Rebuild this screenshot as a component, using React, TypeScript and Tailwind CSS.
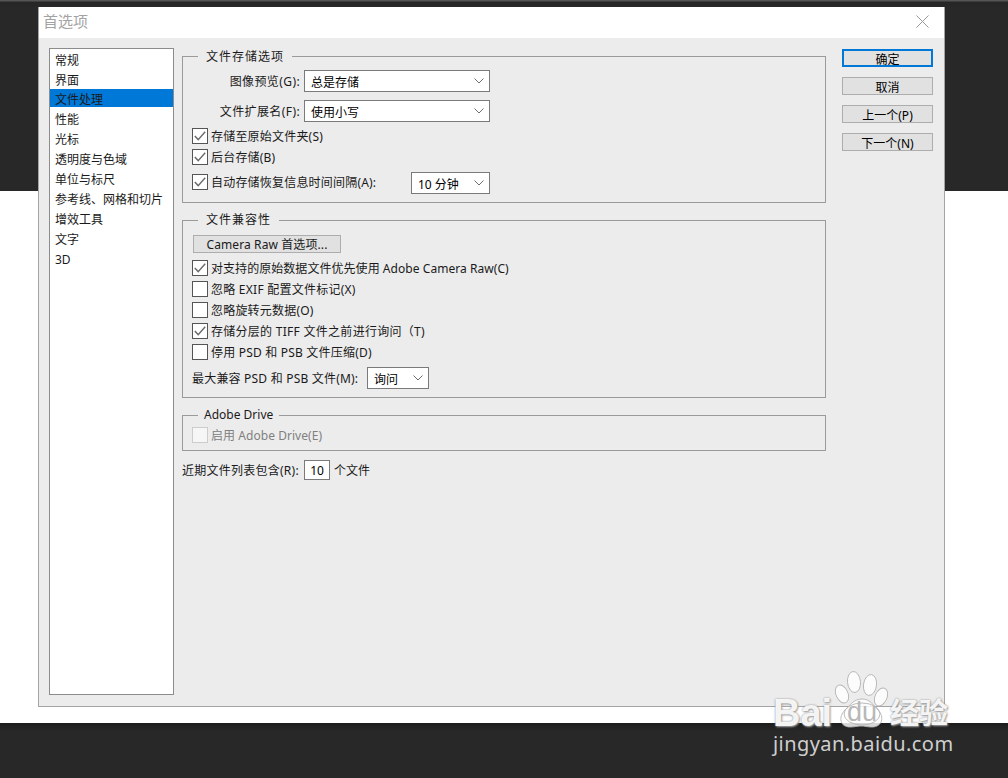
import React from "react";

const FONT = "[font-family:'Noto_Sans','Noto_Sans_CJK_SC',sans-serif]";

function Chevron() {
  return (
    <svg width="10" height="6" viewBox="0 0 10 6" className="shrink-0" fill="none" stroke="#6e6e6e" strokeWidth="1">
      <path d="M0.5 0.5 L5 5 L9.5 0.5" />
    </svg>
  );
}

function Select({ value, w }: { value: string; w: string }) {
  return (
    <div className={`${w} h-[22px] shrink-0 flex items-center justify-between bg-white border border-[#7a7a7a] pl-[6px] pr-[5px] text-black`}>
      <span className="pt-[3px]">{value}</span>
      <Chevron />
    </div>
  );
}

function Check({ label, checked, disabled, className = "", textClass = "tracking-[0.2px]" }: { label: string; checked?: boolean; disabled?: boolean; className?: string; textClass?: string }) {
  return (
    <div className={`flex items-center h-[16px] ${className}`}>
      <div className={`w-[16px] h-[16px] shrink-0 flex items-center justify-center border ${disabled ? "border-[#cccccc] bg-[#f6f6f6]" : "border-[#555555] bg-white"}`}>
        {checked && (
          <svg width="12" height="10" viewBox="0 0 12 10" fill="none" stroke="#6a6a6a" strokeWidth="1.4">
            <path d="M0.8 5 L4.2 8.6 L11.2 0.8" />
          </svg>
        )}
      </div>
      <span className={`ml-[3px] pt-[2px] whitespace-pre ${textClass} ${disabled ? "text-[#808080]" : "text-[#1a1a1a]"}`}>{label}</span>
    </div>
  );
}

function Group({ legend, className, legendClass, children }: { legend: string; className: string; legendClass: string; children: React.ReactNode }) {
  return (
    <fieldset className={`border border-[#9a9a9a] pl-[9px] pr-[10px] ${className}`}>
      <legend className={`h-[16px] text-[#1a1a1a] ${legendClass}`}>{legend}</legend>
      {children}
    </fieldset>
  );
}

function Btn({ label, primary }: { label: string; primary?: boolean }) {
  return (
    <div className={`w-[91px] h-[18px] pt-[3px] flex items-center justify-center bg-[#e1e1e1] text-black leading-none ${primary ? "border-2 border-[#0078d7]" : "border border-[#adadad]"}`}>
      {label}
    </div>
  );
}

const items = ["常规", "界面", "文件处理", "性能", "光标", "透明度与色域", "单位与标尺", "参考线、网格和切片", "增效工具", "文字", "3D"];

function Watermark() {
  return (
    <div className="absolute left-[770px] top-[665px] w-[190px] h-[100px] pointer-events-none">
      <svg className="absolute left-[62px] top-[3px]" width="58" height="62" viewBox="0 0 58 62" fill="#ffffff" fillOpacity="0.82" stroke="#b4b4b4" strokeWidth="0.9">
        <ellipse cx="22" cy="14" rx="6.5" ry="10.5" transform="rotate(-6 22 14)" />
        <ellipse cx="38" cy="17" rx="6.5" ry="10.5" transform="rotate(8 38 17)" />
        <ellipse cx="10" cy="26" rx="6" ry="9.5" transform="rotate(-24 10 26)" />
        <ellipse cx="49" cy="29" rx="6" ry="9.5" transform="rotate(24 49 29)" />
        <path d="M30 31 C38 31 41 37 46 42 C53 49 50 59 40 59 C35 59 33 58 29 58 C25 58 23 59 18 59 C8 59 6 49 13 42 C18 37 22 31 30 31 Z" />
        <ellipse cx="30" cy="46" rx="18" ry="11" fill="none" />
      </svg>
      <div className="absolute left-[3px] top-[26px] text-[38px] leading-[44px] font-bold text-white/90 [font-family:'Liberation_Sans',sans-serif] [text-shadow:0_0_2px_#8a8a8a,1px_1px_2px_#a8a8a8]">Bai</div>
      <div className="absolute left-[77px] top-[34px] text-[27px] leading-[26px] text-[#b8b8b8] [font-family:'Liberation_Sans',sans-serif]">du</div>
      <div className="absolute left-[120px] top-[30px] text-[29px] leading-[32px] font-bold text-white/90 [font-family:'Noto_Sans_CJK_SC',sans-serif] [text-shadow:0_0_2px_#8a8a8a,1px_1px_2px_#a8a8a8]">经验</div>
      <div className="absolute left-[3px] top-[66px] text-[20px] leading-[26px] tracking-[0.43px] text-[#cfcfcf] [font-family:'Noto_Sans',sans-serif]">jingyan.baidu.com</div>
    </div>
  );
}

export default function App() {
  return (
    <div className={`relative w-[1008px] h-[778px] overflow-hidden flex flex-col bg-white text-[12px] leading-[16px] ${FONT}`}>
      <div className="h-[191px] bg-[linear-gradient(#555555_0px,#555555_1px,#262626_2px,#282828_8px)]" />
      <div className="flex-1 bg-white" />
      <div className="h-[55px] bg-[linear-gradient(#1c1c1c,#282828_8px)]" />

      {/* dialog window */}
      <div className="absolute left-[38px] top-[7px] w-[907px] h-[700px] flex flex-col bg-[#ececec] border-x border-b border-[#a4a4a4]">
        <div className="h-[31px] shrink-0 bg-white flex items-center justify-between pl-[4px] pr-[15px] pb-[3px]">
          <span className="text-[15px] text-[#a3a3a3]">首选项</span>
          <svg width="13" height="13" viewBox="0 0 13 13" stroke="#999999" strokeWidth="1" fill="none">
            <path d="M0.5 0.5 L12.5 12.5 M12.5 0.5 L0.5 12.5" />
          </svg>
        </div>

        <div className="flex-1 flex pl-[10px] pt-[10px]">
          {/* category list */}
          <div className="w-[125px] h-[647px] shrink-0 bg-white border border-[#8c8c8c] pt-[1px] flex flex-col text-[#1a1a1a]">
            {items.map((t, i) => (
              <div
                key={t}
                className={
                  i === 2
                    ? "h-[18px] -mt-[1px] mb-[2px] pl-[5px] pt-[3px] flex items-center bg-[#0078d7]"
                    : "h-[20px] pl-[5px] pt-[2px] flex items-center"
                }
              >
                {t}
              </div>
            ))}
          </div>

          {/* options */}
          <div className="w-[644px] ml-[8px] flex flex-col text-[#1a1a1a]">
            <Group legend="文件存储选项" className="h-[155px]" legendClass="leading-[18px] ml-[6px] px-[8px] tracking-[1px]">
              <div className="pt-[6px] flex flex-col w-[298px]">
                <div className="flex items-center justify-end h-[22px]">
                  <span className="mr-[4px] pt-[2px] tracking-[0.4px]">图像预览(G):</span>
                  <Select value="总是存储" w="w-[186px]" />
                </div>
                <div className="flex items-center justify-end h-[22px] mt-[8px]">
                  <span className="mr-[4px] pt-[2px] tracking-[0.4px]">文件扩展名(F):</span>
                  <Select value="使用小写" w="w-[186px]" />
                </div>
                <Check checked label="存储至原始文件夹(S)" className="mt-[6px]" />
                <Check checked label="后台存储(B)" className="mt-[5px]" />
                <div className="flex items-start justify-between h-[22px] mt-[7px]">
                  <Check checked label="自动存储恢复信息时间间隔(A):" className="mt-[2px]" />
                  <Select value="10 分钟" w="w-[79px]" />
                </div>
              </div>
            </Group>

            <Group legend="文件兼容性" className="h-[186px] mt-[9px]" legendClass="leading-[16px] ml-[6px] px-[8px] tracking-[1px]">
              <div className="flex flex-col pt-[7px]">
                <div className="w-[148px] h-[18px] ml-[1px] pt-[2px] flex items-center justify-center bg-[#e1e1e1] border border-[#adadad] text-[#1a1a1a] tracking-[0.1px]">
                  Camera Raw 首选项...
                </div>
                <Check checked label="对支持的原始数据文件优先使用 Adobe Camera Raw(C)" className="mt-[7px]" textClass="tracking-[0.05px]" />
                <Check label="忽略 EXIF 配置文件标记(X)" className="mt-[5px]" textClass="tracking-[0.25px]" />
                <Check label="忽略旋转元数据(O)" className="mt-[5px]" />
                <Check checked label="存储分层的 TIFF 文件之前进行询问（T)" className="mt-[5px]" textClass="tracking-[0.28px]" />
                <Check label="停用 PSD 和 PSB 文件压缩(D)" className="mt-[5px]" />
                <div className="flex items-center h-[22px] mt-[7px]">
                  <span className="tracking-[0.2px] w-[175px] pt-[2px] whitespace-pre">最大兼容 PSD 和 PSB 文件(M):</span>
                  <Select value="询问" w="w-[62px]" />
                </div>
              </div>
            </Group>

            <Group legend="Adobe Drive" className="h-[44px] mt-[9px]" legendClass="leading-[16px] ml-[6px] px-[6px]">
              <Check disabled label="启用 Adobe Drive(E)" className="mt-[4px]" textClass="tracking-[0.05px]" />
            </Group>

            <div className="flex items-center h-[20px] mt-[9px]">
              <span className="w-[122px] pt-[2px] whitespace-pre tracking-[0.25px]">近期文件列表包含(R):</span>
              <div className="w-[26px] h-[20px] pt-[1px] flex items-center justify-center bg-white border border-[#7a7a7a] text-black">10</div>
              <span className="ml-[4px] pt-[2px]">个文件</span>
            </div>
          </div>

          {/* actions */}
          <div className="ml-[16px] mt-[1px] flex flex-col gap-[10px]">
            <Btn primary label="确定" />
            <Btn label="取消" />
            <Btn label="上一个(P)" />
            <Btn label="下一个(N)" />
          </div>
        </div>
      </div>

      <Watermark />
    </div>
  );
}
